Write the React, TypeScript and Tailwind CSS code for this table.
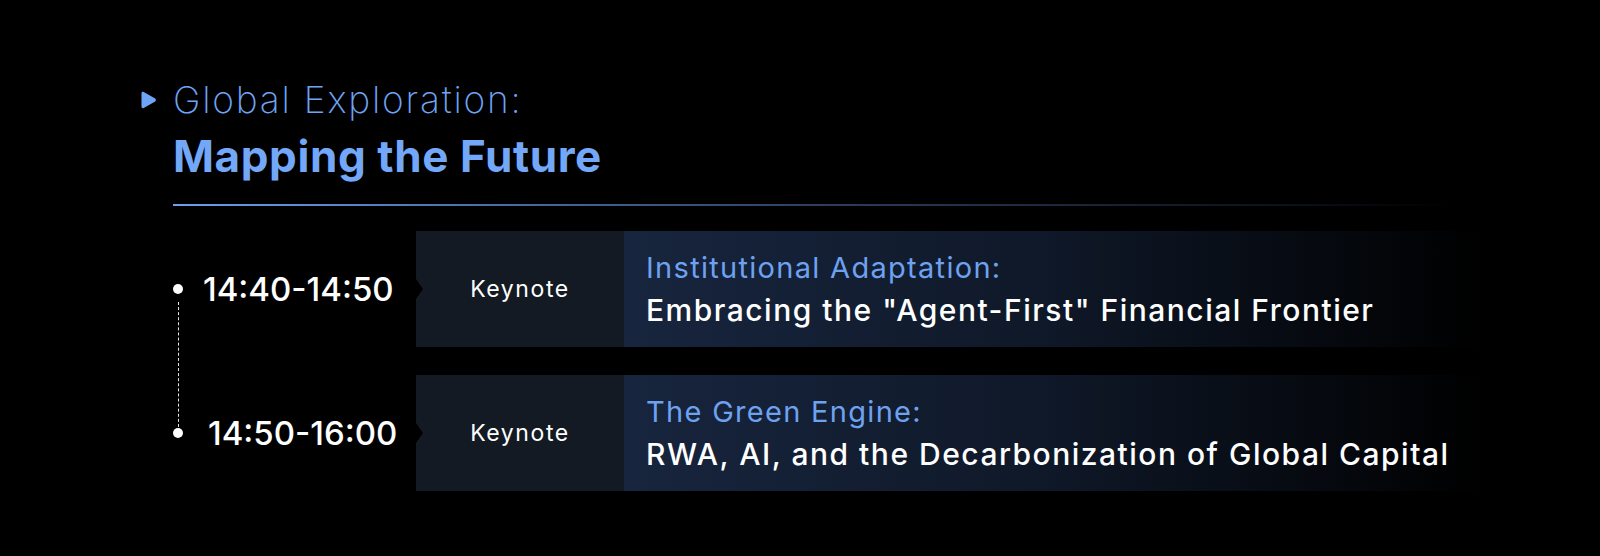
import React from 'react';

const sessions = [
  {
    time: '14:40-14:50',
    timeClass: 'pl-[20px]',
    kind: 'Keynote',
    label: 'Institutional Adaptation:',
    title: 'Embracing the "Agent-First" Financial Frontier',
  },
  {
    time: '14:50-16:00',
    timeClass: 'pl-[25px]',
    kind: 'Keynote',
    label: 'The Green Engine:',
    title: 'RWA, AI, and the Decarbonization of Global Capital',
  },
];

const App = () => {
  return (
    <div
      className="w-[1600px] h-[556px] bg-black text-white overflow-hidden"
      style={{ fontFamily: 'Inter, "Noto Sans", sans-serif' }}
    >
      <div className="pl-[140px] pt-[76px]">
        {/* Heading */}
        <div className="flex items-center gap-[16px]">
          <svg width="17" height="18" viewBox="0 0 17 18" className="shrink-0">
            <path
              d="M1.5 2.2 C1.5 1 2.7 0.4 3.7 1 L15.2 7.6 C16.1 8.2 16.1 9.8 15.2 10.4 L3.7 17 C2.7 17.6 1.5 17 1.5 15.8 Z"
              fill="#6ea4f5"
            />
          </svg>
          <div className="text-[37px] leading-[48px] font-extralight text-[#6ea4f5] tracking-[1.8px]">
            Global Exploration:
          </div>
        </div>
        <div className="ml-[33px] mt-[4px] text-[44px] leading-[56px] font-bold text-[#73a7f7] tracking-[0.6px]">
          Mapping the Future
        </div>
        <div className="ml-[33px] mt-[20px] w-[1280px] h-[2px] bg-gradient-to-r from-[#6b9ff0] via-[#2d4062] to-transparent" />

        {/* Schedule rows */}
        <div className="relative mt-[25px] flex flex-col gap-[28px]">
          <div className="absolute left-[38px] top-[71px] h-[130px] border-l border-dashed border-white/90" />
          {sessions.map((s) => (
            <div key={s.time} className="flex h-[116px] items-stretch">
              <div className="w-[276px] flex items-center">
                <div className="ml-[33px] w-[10px] h-[10px] rounded-full bg-white shrink-0" />
                <div className={`${s.timeClass} text-[33px] font-medium leading-none`}>{s.time}</div>
              </div>
              <div className="relative w-[208px] bg-[#131a23] flex items-center justify-center">
                <div className="absolute left-0 top-1/2 -translate-y-1/2 w-0 h-0 border-y-[10px] border-y-transparent border-l-[7px] border-l-black" />
                <span className="text-[23px] font-normal tracking-[1.6px]">{s.kind}</span>
              </div>
              <div className="w-[860px] bg-gradient-to-r from-[#17253e] via-[#0f1828] to-transparent flex flex-col justify-center pl-[22px]">
                <div className="text-[29px] leading-[42px] text-[#6ea2f0] tracking-[1.3px]">{s.label}</div>
                <div className="text-[30px] leading-[42px] font-medium tracking-[1.5px]">{s.title}</div>
              </div>
            </div>
          ))}
        </div>
      </div>
    </div>
  );
};

export default App;
